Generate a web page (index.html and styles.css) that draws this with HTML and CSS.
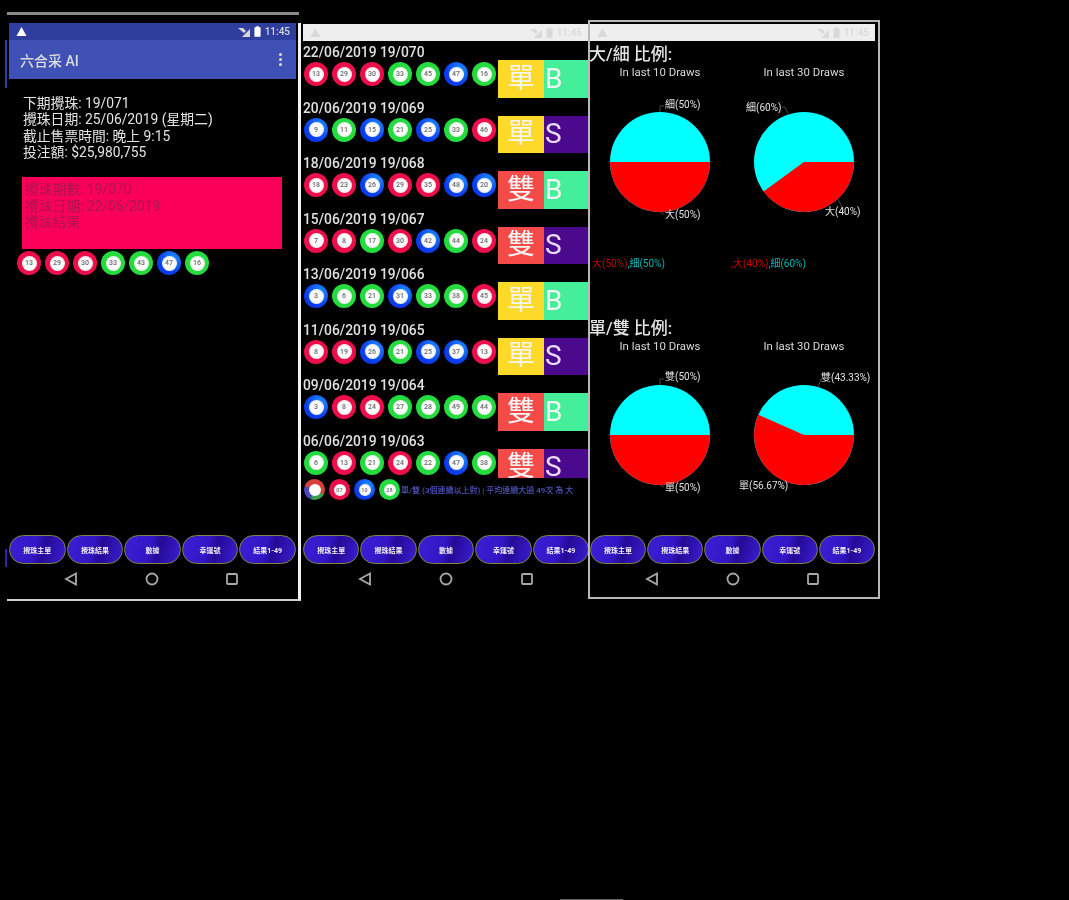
FILE: index.html
```html
<!DOCTYPE html>
<html lang="zh-Hant">
<head>
<meta charset="utf-8">
<title>六合采 AI</title>
<link rel="stylesheet" href="styles.css">
</head>
<body>
<div class="stage">

  <section class="phone one">
    <div class="topline"></div>
    <div class="edge-tab"></div>
    <div class="edge-tab low"></div>
    <div class="frame">
      <div class="status dark">
        <svg class="warn" viewBox="0 0 12 12"><path d="M6 1 11.500 11H.5Z"/></svg>
        <span class="spacer"></span>
        <svg class="sig" viewBox="0 0 12 12"><path d="M0 2h5l3 3-2 2ZM12 3v8H4Z"/></svg>
        <svg class="bat" viewBox="0 0 8 12"><path d="M2.500 0h3v1H7.500v11H.5V1h2Z"/></svg>
        <span class="time">11:45</span>
      </div>
      <div class="appbar">
        <span class="apptitle">六合采 AI</span>
        <span class="dots"><i></i><i></i><i></i></span>
      </div>
      <div class="info">
        <p>下期攪珠: 19/071</p>
        <p>攪珠日期: 25/06/2019 (星期二)</p>
        <p>截止售票時間: 晚上 9:15</p>
        <p>投注額: $25,980,755</p>
      </div>
      <div class="result">
        <p>攪珠期數: 19/070</p>
        <p>攪珠日期: 22/06/2019</p>
        <p>攪珠結果</p>
      </div>
      <div class="balls home">
        <span class="ball r"><b>13</b></span><span class="ball r"><b>29</b></span><span class="ball r"><b>30</b></span><span class="ball g"><b>33</b></span><span class="ball g"><b>43</b></span><span class="ball b"><b>47</b></span><span class="ball g"><b>16</b></span>
      </div>
      <div class="bottom">
        <div class="btnbar">
          <span class="btn">攪珠主單</span><span class="btn">攪珠結果</span><span class="btn">數據</span><span class="btn">幸運號</span><span class="btn">結果1-49</span>
        </div>
        <div class="sysnav">
          <svg viewBox="0 0 14 14"><path d="M12 1.500V12.500L2 7Z"/></svg>
          <svg viewBox="0 0 14 14"><circle cx="7" cy="7" r="5.500"/></svg>
          <svg viewBox="0 0 14 14"><rect x="2" y="2" width="10" height="10" rx="1"/></svg>
        </div>
      </div>
    </div>
  </section>

  <section class="phone two">
    <div class="status light">
      <svg class="warn" viewBox="0 0 12 12"><path d="M6 1 11.500 11H.5Z"/></svg>
      <span class="spacer"></span>
      <svg class="sig" viewBox="0 0 12 12"><path d="M0 2h5l3 3-2 2ZM12 3v8H4Z"/></svg>
      <svg class="bat" viewBox="0 0 8 12"><path d="M2.500 0h3v1H7.500v11H.5V1h2Z"/></svg>
      <span class="time">11:45</span>
    </div>
    <div class="list">
      <article class="draw">
        <div class="draw-main"><h3>22/06/2019 19/070</h3><div class="balls">
          <span class="ball r"><b>13</b></span><span class="ball r"><b>29</b></span><span class="ball r"><b>30</b></span><span class="ball g"><b>33</b></span><span class="ball g"><b>45</b></span><span class="ball b"><b>47</b></span><span class="ball g"><b>16</b></span>
        </div></div>
        <span class="tag yellow">單</span><span class="tag mint">B</span>
      </article>
      <article class="draw">
        <div class="draw-main"><h3>20/06/2019 19/069</h3><div class="balls">
          <span class="ball b"><b>9</b></span><span class="ball g"><b>11</b></span><span class="ball b"><b>15</b></span><span class="ball g"><b>21</b></span><span class="ball b"><b>25</b></span><span class="ball g"><b>33</b></span><span class="ball r"><b>46</b></span>
        </div></div>
        <span class="tag yellow">單</span><span class="tag violet">S</span>
      </article>
      <article class="draw">
        <div class="draw-main"><h3>18/06/2019 19/068</h3><div class="balls">
          <span class="ball r"><b>18</b></span><span class="ball r"><b>23</b></span><span class="ball b"><b>26</b></span><span class="ball r"><b>29</b></span><span class="ball r"><b>35</b></span><span class="ball b"><b>48</b></span><span class="ball b"><b>20</b></span>
        </div></div>
        <span class="tag coral">雙</span><span class="tag mint">B</span>
      </article>
      <article class="draw">
        <div class="draw-main"><h3>15/06/2019 19/067</h3><div class="balls">
          <span class="ball r"><b>7</b></span><span class="ball r"><b>8</b></span><span class="ball g"><b>17</b></span><span class="ball r"><b>30</b></span><span class="ball b"><b>42</b></span><span class="ball g"><b>44</b></span><span class="ball r"><b>24</b></span>
        </div></div>
        <span class="tag coral">雙</span><span class="tag violet">S</span>
      </article>
      <article class="draw">
        <div class="draw-main"><h3>13/06/2019 19/066</h3><div class="balls">
          <span class="ball b"><b>3</b></span><span class="ball g"><b>6</b></span><span class="ball g"><b>21</b></span><span class="ball b"><b>31</b></span><span class="ball g"><b>33</b></span><span class="ball g"><b>38</b></span><span class="ball r"><b>45</b></span>
        </div></div>
        <span class="tag yellow">單</span><span class="tag mint">B</span>
      </article>
      <article class="draw">
        <div class="draw-main"><h3>11/06/2019 19/065</h3><div class="balls">
          <span class="ball r"><b>8</b></span><span class="ball r"><b>19</b></span><span class="ball b"><b>26</b></span><span class="ball g"><b>21</b></span><span class="ball b"><b>25</b></span><span class="ball b"><b>37</b></span><span class="ball r"><b>13</b></span>
        </div></div>
        <span class="tag yellow">單</span><span class="tag violet">S</span>
      </article>
      <article class="draw">
        <div class="draw-main"><h3>09/06/2019 19/064</h3><div class="balls">
          <span class="ball b"><b>3</b></span><span class="ball r"><b>8</b></span><span class="ball r"><b>24</b></span><span class="ball g"><b>27</b></span><span class="ball g"><b>28</b></span><span class="ball g"><b>49</b></span><span class="ball g"><b>44</b></span>
        </div></div>
        <span class="tag coral">雙</span><span class="tag mint">B</span>
      </article>
      <article class="draw">
        <div class="draw-main"><h3>06/06/2019 19/063</h3><div class="balls">
          <span class="ball g"><b>6</b></span><span class="ball r"><b>13</b></span><span class="ball g"><b>21</b></span><span class="ball r"><b>24</b></span><span class="ball g"><b>22</b></span><span class="ball b"><b>47</b></span><span class="ball g"><b>38</b></span>
        </div></div>
        <span class="tag coral">雙</span><span class="tag violet">S</span>
      </article>
    </div>
    <div class="footrow">
      <span class="ball small multi"></span>
      <span class="ball small r"><b>07</b></span>
      <span class="ball small b"><b>10</b></span>
      <span class="ball small g"><b>28</b></span>
      <span class="footnote">單/雙 (3個連續以上對) | 平均連續大過 49次 為 大</span>
    </div>
    <div class="bottom">
      <div class="btnbar">
        <span class="btn">攪珠主單</span><span class="btn">攪珠結果</span><span class="btn">數據</span><span class="btn">幸運號</span><span class="btn">結果1-49</span>
      </div>
      <div class="sysnav">
        <svg viewBox="0 0 14 14"><path d="M12 1.500V12.500L2 7Z"/></svg>
        <svg viewBox="0 0 14 14"><circle cx="7" cy="7" r="5.500"/></svg>
        <svg viewBox="0 0 14 14"><rect x="2" y="2" width="10" height="10" rx="1"/></svg>
      </div>
    </div>
  </section>

  <section class="phone three">
    <div class="status light">
      <svg class="warn" viewBox="0 0 12 12"><path d="M6 1 11.500 11H.5Z"/></svg>
      <span class="spacer"></span>
      <svg class="sig" viewBox="0 0 12 12"><path d="M0 2h5l3 3-2 2ZM12 3v8H4Z"/></svg>
      <svg class="bat" viewBox="0 0 8 12"><path d="M2.500 0h3v1H7.500v11H.5V1h2Z"/></svg>
      <span class="time">11:45</span>
    </div>

    <div class="ratio">
      <h2>大/細 比例:</h2>
      <div class="subs"><span>In last 10 Draws</span><span>In last 30 Draws</span></div>
      <svg class="pies" viewBox="0 0 288 165">
        <circle class="cyan" cx="70" cy="81" r="50"/>
        <path class="red" d="M20 81A50 50 0 0 0 120 81Z"/>
        <circle class="cyan" cx="214" cy="81" r="50"/>
        <path class="red" d="M214 81H264A50 50 0 0 1 173.500 110.400Z"/>
        <path class="lead" d="M70 31V25H74M70 131 74 133M198 33 195 26H192M248 118 254 130"/>
        <text x="75" y="27">細(50%)</text>
        <text x="75" y="137">大(50%)</text>
        <text x="156" y="30">細(60%)</text>
        <text x="235" y="134">大(40%)</text>
      </svg>
      <div class="legend">
        <span><em class="lred">大(50%)</em><em class="lcyan">,細(50%)</em></span>
        <span><em class="lred">,大(40%)</em><em class="lcyan">,細(60%)</em></span>
      </div>
    </div>

    <div class="ratio last">
      <h2>單/雙 比例:</h2>
      <div class="subs"><span>In last 10 Draws</span><span>In last 30 Draws</span></div>
      <svg class="pies" viewBox="0 0 288 165">
        <circle class="cyan" cx="70" cy="81" r="50"/>
        <path class="red" d="M20 81A50 50 0 0 0 120 81Z"/>
        <circle class="cyan" cx="214" cy="81" r="50"/>
        <path class="red" d="M214 81H264A50 50 0 1 1 168.300 60.700Z"/>
        <path class="lead" d="M70 31V25H74M70 131 74 133M228 33 231 25H234M195 128 191 133"/>
        <text x="75" y="26">雙(50%)</text>
        <text x="75" y="137">單(50%)</text>
        <text x="231" y="27">雙(43.33%)</text>
        <text x="149" y="135">單(56.67%)</text>
      </svg>
    </div>

    <div class="bottom">
      <div class="btnbar">
        <span class="btn">攪珠主單</span><span class="btn">攪珠結果</span><span class="btn">數據</span><span class="btn">幸運號</span><span class="btn">結果1-49</span>
      </div>
      <div class="sysnav">
        <svg viewBox="0 0 14 14"><path d="M12 1.500V12.500L2 7Z"/></svg>
        <svg viewBox="0 0 14 14"><circle cx="7" cy="7" r="5.500"/></svg>
        <svg viewBox="0 0 14 14"><rect x="2" y="2" width="10" height="10" rx="1"/></svg>
      </div>
    </div>
  </section>
</div>
<div class="cutoff"></div>
</body>
</html>
```

FILE: styles.css
```css
* { box-sizing: border-box; }

html, body {
  margin: 0;
  height: 900px;
  overflow: hidden;
  background: #000;
}

body {
  position: relative;
  color: #e2e2e2;
  font-family: Roboto, "Noto Sans CJK TC", sans-serif;
}

p, h2, h3 { margin: 0; font-weight: 400; }

.stage {
  display: flex;
  align-items: flex-start;
  padding-left: 7px;
  filter: blur(0.75px);
}

.phone { display: flex; flex-direction: column; position: relative; }

.one { width: 294px; height: 589px; margin-top: 12px; }
.two { width: 287px; height: 573px; margin-top: 24px; padding-left: 2px; }
.three {
  width: 292px;
  height: 579px;
  margin-top: 20px;
  padding-top: 2px;
  border: 2px solid #b8b8b8;
}

.topline { height: 3px; width: 292px; background: #8a8a8a; flex: none; }
.edge-tab {
  position: absolute;
  left: -2px;
  top: 28px;
  width: 2px;
  height: 48px;
  background: #2c3fa8;
}
.edge-tab.low { top: 537px; height: 18px; background: #3a20b8; }

.frame {
  display: flex;
  flex-direction: column;
  flex: 1;
  margin-top: 8px;
  padding-bottom: 2px;
  border-right: 3px solid #f2f2f2;
  border-bottom: 2px solid #cfcfcf;
}

/* status bars */
.status {
  display: flex;
  align-items: center;
  height: 17px;
  flex: none;
  padding: 0 6px 0 7px;
  gap: 4px;
}
.status.dark { margin: 0 2px; background: #2f3d9c; color: #d8d8d8; }
.status.light { background: #eeeeee; color: #d9d9d9; margin-right: 0; }
.three .status.light { margin-right: 3px; }
.status svg { fill: currentColor; display: block; }
.status .warn { width: 11px; height: 11px; }
.status.dark .warn { fill: #fff; }
.status .sig { width: 12px; height: 12px; }
.status .bat { width: 7px; height: 11px; }
.status.dark .bat { fill: #fff; }
.spacer { flex: 1; }
.time { font-size: 10px; font-weight: 500; }

.appbar {
  display: flex;
  align-items: center;
  justify-content: space-between;
  height: 39px;
  flex: none;
  margin: 0 2px;
  padding: 0 14px 0 11px;
  background: #3f51b5;
}
.apptitle { font-size: 14px; font-weight: 500; color: #dcdcdc; }
.dots { display: flex; flex-direction: column; gap: 2px; }
.dots i { width: 3px; height: 3px; background: #ddd; border-radius: 50%; }

.info {
  padding: 16px 0 0 16px;
  font-size: 13.800px;
  font-weight: 500;
  line-height: 16.300px;
  color: #e4e4e4;
}
.result {
  width: 260px;
  height: 72px;
  margin: 17px 0 0 15px;
  padding: 4px 3px;
  background: #fb0059;
  color: #ad1450;
  font-size: 13.800px;
  font-weight: 500;
  line-height: 16.400px;
}

/* balls */
.balls { display: flex; gap: 4px; }
.balls.home { margin: 2px 0 0 10px; }

.ball {
  display: flex;
  align-items: center;
  justify-content: center;
  width: 24px;
  height: 24px;
  flex: none;
  border-radius: 50%;
}
.ball b {
  display: flex;
  align-items: center;
  justify-content: center;
  width: 15px;
  height: 15px;
  border-radius: 50%;
  background: radial-gradient(circle, #fff 40%, #dcdcdc 100%);
  color: #666;
  font-size: 7px;
  font-weight: 500;
}
.ball.r { background: #ef0e4c; }
.ball.g { background: #25dc3f; }
.ball.b { background: radial-gradient(circle at 65% 35%, #1f9cff 0%, #0b3df0 60%, #0a30e0 100%); }
.ball.small { width: 21px; height: 21px; }
.ball.small b { width: 12px; height: 12px; font-size: 5.500px; }
.ball.multi {
  position: relative;
  background: conic-gradient(#d8403c 0 120deg, #3aa050 120deg 200deg, #4a48c0 200deg 290deg, #d8403c 290deg);
}
.ball.multi::after {
  content: "";
  width: 12px;
  height: 12px;
  border-radius: 50%;
  background: #fff;
}

/* draw list */
.list { height: 433px; margin-top: 4px; overflow: hidden; flex: none; }
.draw {
  display: flex;
  align-items: flex-start;
  width: 285px;
  height: 55.500px;
}
.draw-main { width: 195px; flex: none; }
.draw h3 {
  height: 15px;
  margin-bottom: 2px;
  font-size: 13.800px;
  font-weight: 500;
  line-height: 15px;
  color: #e0e0e0;
  white-space: nowrap;
}
.draw .balls { margin-left: 1px; }
.tag {
  display: flex;
  align-items: center;
  height: 37.500px;
  margin-top: 15px;
  font-size: 28px;
  line-height: 1;
  color: #f5f5f5;
  overflow: hidden;
}
.tag.yellow, .tag.coral { width: 46px; justify-content: center; }
.tag.mint, .tag.violet { width: 44px; padding-left: 1px; }
.yellow { background: #fdd92a; }
.coral { background: #f44a48; }
.mint { background: #45ee98; }
.violet { background: #4b0a8e; color: #e6dcf5; }

.footrow {
  display: flex;
  align-items: center;
  gap: 4px;
  height: 23px;
  padding-left: 1px;
}
.footnote {
  margin-left: -3px;
  font-size: 8px;
  font-weight: 500;
  color: #4d55bb;
  white-space: nowrap;
}

/* bottom bar */
.bottom { margin-top: auto; height: 62px; flex: none; }
.btnbar { display: flex; gap: 1px; height: 29px; padding: 0 2px; }
.two .btnbar { padding: 0; margin-right: -1px; }
.three .btnbar { padding: 0 3px 0 0; }
.btn {
  display: flex;
  align-items: center;
  justify-content: center;
  flex: 1;
  border: 1.500px solid #85843f;
  border-radius: 15px;
  background: linear-gradient(105deg, #3b1fd6 0%, #3316c4 45%, #240a96 60%, #3a1ed2 100%);
  color: #efefef;
  font-size: 7px;
  font-weight: 700;
}
.sysnav {
  display: flex;
  justify-content: space-between;
  padding: 8px 59px 0 57px;
}
.two .sysnav { padding: 8px 54px 0 55px; }
.three .sysnav { padding: 8px 58px 0 55px; }
.sysnav svg {
  width: 14px;
  height: 14px;
  fill: none;
  stroke: #a8a8a8;
  stroke-width: 1.800;
}

/* ratios */
.ratio { height: 273.500px; flex: none; }
.ratio.last { height: 217px; }
.ratio h2 {
  margin: 4px 0 2px -1px;
  height: 18px;
  font-size: 17px;
  font-weight: 500;
  line-height: 18px;
  color: #e4e4e4;
}
.subs { display: grid; grid-template-columns: 140px 148px; height: 14px; }
.subs span { font-size: 11.400px; line-height: 14px; text-align: center; color: #d8d8d8; white-space: nowrap; }
.pies { display: block; width: 288px; height: 165px; margin-top: 1.500px; }
.pies text { font-size: 10px; fill: #e0e0e0; font-family: Roboto, "Noto Sans CJK TC", sans-serif; }
.cyan { fill: #00ffff; }
.red { fill: #ff0000; }
.lead { fill: none; stroke: #777; stroke-width: 0.600; }
.legend {
  display: grid;
  grid-template-columns: 139px 149px;
  padding-left: 2px;
  margin-top: 12px;
  font-size: 10px;
  line-height: 12px;
}
.legend em { font-style: normal; }
.lred { color: #c40000; }
.lcyan { color: #08b4b4; }

.cutoff {
  position: absolute;
  left: 560px;
  bottom: 0;
  width: 63px;
  height: 1px;
  background: #666;
}
```
